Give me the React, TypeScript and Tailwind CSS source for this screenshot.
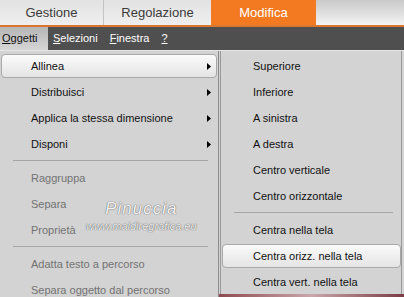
import React from "react";

type Item =
  | { kind: "item"; label: string; sub?: boolean; disabled?: boolean; active?: boolean }
  | { kind: "sep" };

const leftItems: Item[] = [
  { kind: "item", label: "Allinea", sub: true, active: true },
  { kind: "item", label: "Distribuisci", sub: true },
  { kind: "item", label: "Applica la stessa dimensione", sub: true },
  { kind: "item", label: "Disponi", sub: true },
  { kind: "sep" },
  { kind: "item", label: "Raggruppa", disabled: true },
  { kind: "item", label: "Separa", disabled: true },
  { kind: "item", label: "Proprietà", disabled: true },
  { kind: "sep" },
  { kind: "item", label: "Adatta testo a percorso", disabled: true },
  { kind: "item", label: "Separa oggetto dal percorso", disabled: true },
];

const rightItems: Item[] = [
  { kind: "item", label: "Superiore" },
  { kind: "item", label: "Inferiore" },
  { kind: "item", label: "A sinistra" },
  { kind: "item", label: "A destra" },
  { kind: "item", label: "Centro verticale" },
  { kind: "item", label: "Centro orizzontale" },
  { kind: "sep" },
  { kind: "item", label: "Centra nella tela" },
  { kind: "item", label: "Centra orizz. nella tela", active: true },
  { kind: "item", label: "Centra vert. nella tela" },
];

function Arrow() {
  return (
    <svg width="4" height="7" viewBox="0 0 4 7" className="ml-auto">
      <path d="M0 0 L4 3.5 L0 7 Z" fill="#000" />
    </svg>
  );
}

function MenuList({ items, textPad, sepClass }: { items: Item[]; textPad: string; sepClass: string }) {
  return (
    <div className="flex flex-col pt-[2px]">
      {items.map((it, i) =>
        it.kind === "sep" ? (
          <div key={i} className="h-[8px] flex items-start pt-[3px]">
            <div className={`h-px bg-[#a6a6a6] ${sepClass}`} />
          </div>
        ) : (
          <div key={i} className="h-[26px] flex items-center">
            <div
              className={
                it.active
                  ? "h-[24px] w-full flex items-center rounded-[4px] border border-[#a9a9a9] bg-gradient-to-b from-[#fbfbfb] to-[#e4e4e4] pr-[5px]"
                  : "h-[24px] w-full flex items-center border border-transparent pr-[5px]"
              }
            >
              <span className={`${textPad} ${it.disabled ? "text-[#727272]" : "text-[#111]"}`}>
                {it.label}
              </span>
              {it.sub && <Arrow />}
            </div>
          </div>
        )
      )}
    </div>
  );
}

export default function App() {
  return (
    <div
      className="relative w-[404px] h-[297px] overflow-hidden bg-[#d3d3d3] text-[11px] leading-none"
      style={{ fontFamily: '"Liberation Sans", Arial, sans-serif' }}
    >
      {/* tabs */}
      <div className="flex h-[25px] bg-gradient-to-b from-[#c9c9c9] to-[#f4f4f4]">
        <div className="w-[104px] flex items-center justify-center bg-gradient-to-b from-[#e2e2e2] to-[#efefef] border-r border-[#c4c4c4] text-[13px] text-[#3a3a3a]">
          Gestione
        </div>
        <div className="w-[107px] flex items-center justify-center bg-gradient-to-b from-[#e2e2e2] to-[#efefef] text-[13px] text-[#3a3a3a]">
          Regolazione
        </div>
        <div className="w-[105px] flex items-center justify-center bg-[#f47a22] text-[13px] text-white">
          Modifica
        </div>
      </div>
      <div className="h-[2px] bg-[#d9772f]" />

      {/* menubar */}
      <div className="flex h-[23px] bg-[#4f4f4f] text-white">
        <div className="w-[48px] flex items-center pl-[2px] bg-gradient-to-b from-[#b5b5b5] to-[#d6d6d6] text-[#111]">
          <span>
            <span className="underline">O</span>ggetti
          </span>
        </div>
        <div className="flex items-center pl-[5px]">
          <span className="underline">S</span>elezioni
        </div>
        <div className="flex items-center pl-[12px]">
          <span className="underline">F</span>inestra
        </div>
        <div className="flex items-center pl-[12px]">
          <span className="underline">?</span>
        </div>
      </div>

      {/* menus */}
      <div className="flex h-[247px] border-t border-[#e6e6e6]">
        <div className="w-[219px] pl-px pr-[1px] border-r border-[#8c8c8c] bg-[#d3d3d3]">
          <MenuList items={leftItems} textPad="pl-[29px]" sepClass="ml-[12px] w-[195px]" />
        </div>
        <div className="flex-1 flex flex-col">
          <div className="h-[243px] ml-px mr-[2px] pl-px border-l border-r border-[#9a9a9a] bg-[#d3d3d3]">
            <MenuList items={rightItems} textPad="pl-[30px]" sepClass="ml-[12px] w-[159px]" />
          </div>
          <div className="flex-1 bg-gradient-to-r from-[#8e4a52] via-[#c9a7ab] to-[#7a3d45]" />
        </div>
      </div>

      {/* watermark */}
      <div className="absolute left-[86px] top-[200px] flex flex-col items-center pointer-events-none">
        <span
          className="text-[17px] italic tracking-[1px] text-[#f2f2f2]"
          style={{ textShadow: "0 0 1px #6b6b6b, 0 0 1px #6b6b6b" }}
        >
          Pinuccia
        </span>
        <span
          className="mt-[4px] text-[11px] italic text-[#eeeeee]"
          style={{ textShadow: "0 0 1px #6b6b6b, 0 0 1px #6b6b6b" }}
        >
          www.maidiregrafica.eu
        </span>
      </div>
    </div>
  );
}
